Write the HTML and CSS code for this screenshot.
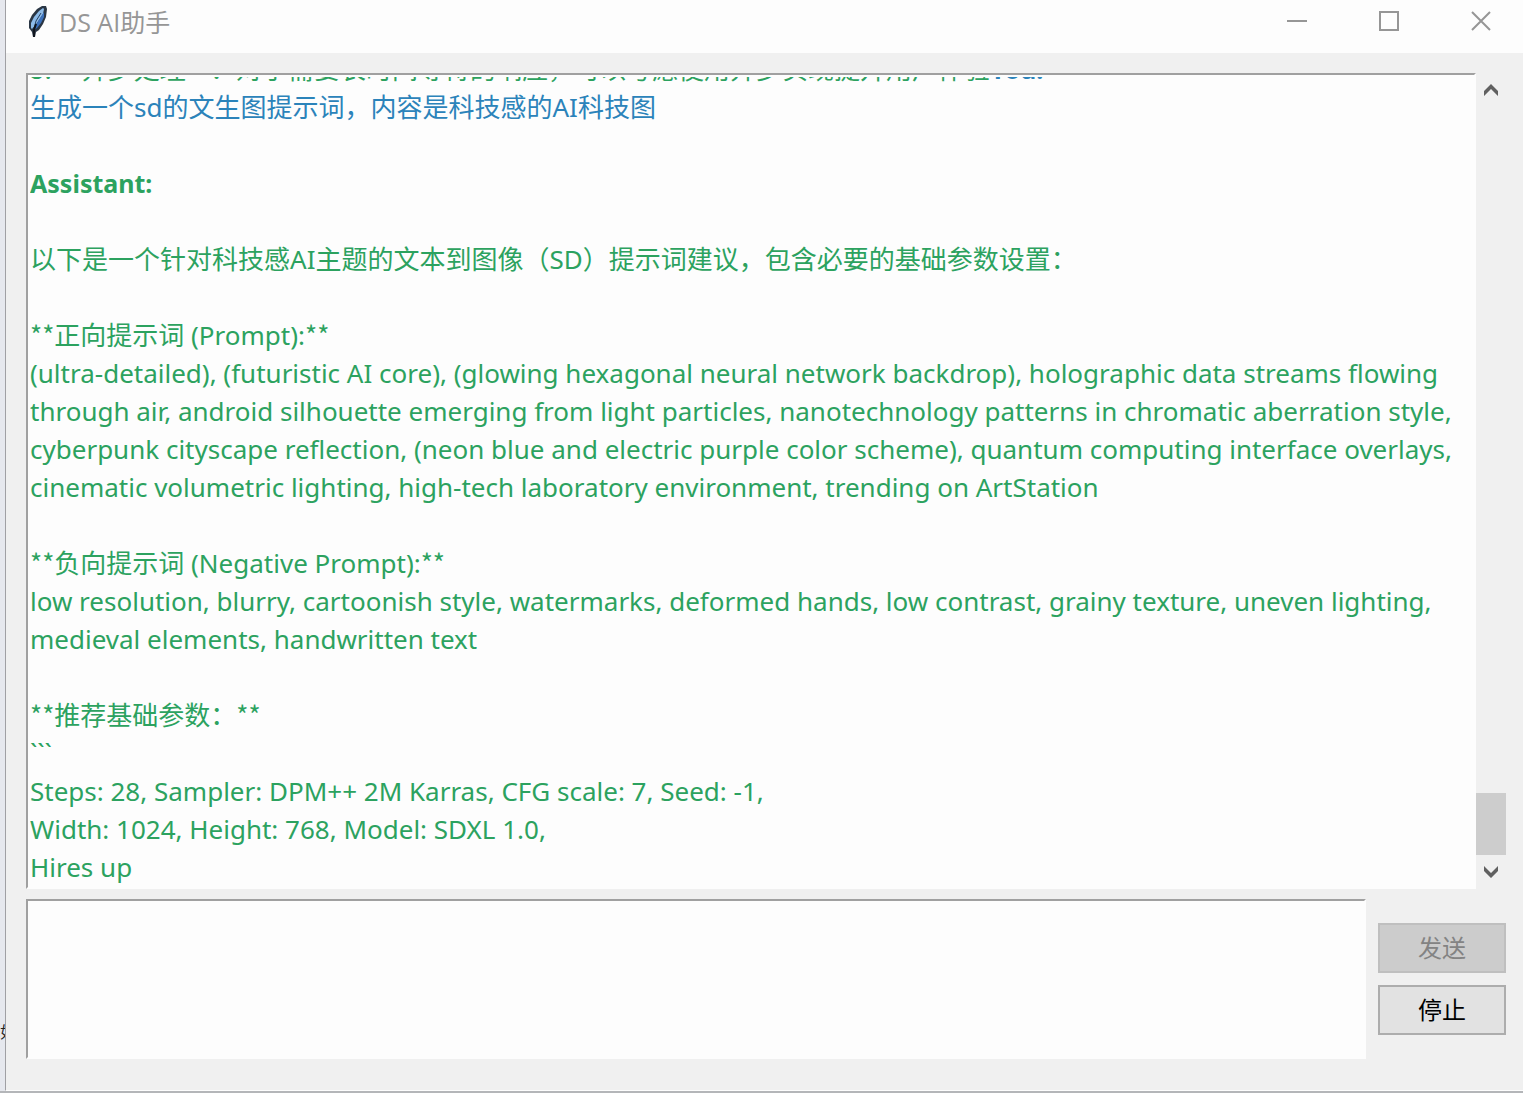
FILE: index.html
```
<!DOCTYPE html>
<html lang="zh-CN">
<head>
<meta charset="utf-8">
<title>DS AI助手</title>
<link rel="stylesheet" href="styles.css">
</head>
<body>
<div class="desktop"><span class="behind">如</span></div>
<div class="window">
  <header class="titlebar">
    <svg class="feather" viewBox="0 0 20 32" aria-hidden="true">
      <path d="M14 0l4 0 1 3-1 8-3 7-4 6-3 2-1 5-2 0-1-5-3-4 0-7 3-6 5-6z" fill="#2a3644"/>
      <path d="M15 2l1 1-1 5-6 9-5 6-1-1 0-5 3-6 5-6z" fill="#8dbbe8"/>
      <path d="M16 6l0 5-3 6-4 5-3 2 3-7z" fill="#3a70bb"/>
      <path d="M13 7L8 15 6 23" fill="none" stroke="#26405f" stroke-width="1"/>
      <path d="M8 18L6 24V31" fill="none" stroke="#10161e" stroke-width="2"/>
    </svg>
    <h1 class="title">DS AI助手</h1>
    <div class="controls">
      <button class="control" aria-label="最小化"><svg viewBox="0 0 20 20"><path d="M0 10H20"/></svg></button>
      <button class="control" aria-label="最大化"><svg viewBox="0 0 20 20"><path d="M1 1H19V19H1Z"/></svg></button>
      <button class="control" aria-label="关闭"><svg viewBox="0 0 20 20"><path d="M1 1L19 19M19 1L1 19"/></svg></button>
    </div>
  </header>
  <main class="content">
    <section class="history">
      <div class="log">
        <p><span class="han">3. **异步处理**：对于需要长时间等待的响应，可以考虑使用异步实现提升用户体验</span><b class="user">You:</b></p>
        <p class="user"><span class="han">生成一个</span>sd<span class="han">的文生图提示词，内容是科技感的</span>AI<span class="han">科技图</span></p>
        <br>
        <p><b>Assistant:</b></p>
        <br>
        <p><span class="han">以下是一个针对科技感</span>AI<span class="han">主题的文本到图像（</span>SD<span class="han">）提示词建议，包含必要的基础参数设置：</span></p>
        <br>
        <p><span class="han">**正向提示词</span> (Prompt):<span class="han">**</span></p>
        <p>(ultra-detailed), (futuristic AI core), (glowing hexagonal neural network backdrop), holographic data streams flowing through air, android silhouette emerging from light particles, nanotechnology patterns in chromatic aberration style, cyberpunk cityscape reflection, (neon blue and electric purple color scheme), quantum computing interface overlays, cinematic volumetric lighting, high-tech laboratory environment, trending on ArtStation</p>
        <br>
        <p><span class="han">**负向提示词</span> (Negative Prompt):<span class="han">**</span></p>
        <p>low resolution, blurry, cartoonish style, watermarks, deformed hands, low contrast, grainy texture, uneven lighting, medieval elements, handwritten text</p>
        <br>
        <p><span class="han">**推荐基础参数：**</span></p>
        <p>```</p>
        <p>Steps: 28, Sampler: DPM++ 2M Karras, CFG scale: 7, Seed: -1,</p>
        <p>Width: 1024, Height: 768, Model: SDXL 1.0,</p>
        <p>Hires up</p>
      </div>
      <div class="scrollbar">
        <button class="arrow" aria-label="向上滚动"><svg viewBox="0 0 14 12"><path d="M7 0L14 7V12L7 5L0 12V7Z"/></svg></button>
        <div class="track"><div class="thumb"></div></div>
        <button class="arrow" aria-label="向下滚动"><svg viewBox="0 0 14 12"><path d="M7 12L14 5V0L7 7L0 0V5Z"/></svg></button>
      </div>
    </section>
    <form class="composer">
      <textarea class="message" aria-label="消息"></textarea>
      <div class="actions">
        <button class="action" type="submit" disabled>发送</button>
        <button class="action" type="button">停止</button>
      </div>
    </form>
  </main>
</div>
</body>
</html>
```
FILE: styles.css
```
* { box-sizing: border-box; }

body {
  margin: 0;
  height: 100vh;
  display: flex;
  overflow: hidden;
  padding-bottom: 2px;
  background: #b4b6b9;
  font-family: "Noto Sans", "Noto Sans CJK SC", sans-serif;
}

button { padding: 0; border: 0; background: none; font: inherit; }
svg { display: block; }

.desktop {
  width: 5px;
  flex: none;
  display: flex;
  align-items: flex-end;
  overflow: hidden;
  padding-bottom: 48px;
  background: #e6e8ee;
  color: #222;
  font-size: 16px;
}

.window {
  flex: 1;
  min-width: 0;
  display: flex;
  flex-direction: column;
  border-left: 1px solid #a0a0a4;
  border-bottom: 1px solid #fdfdfd;
  background: #f0f0f0;
}

.titlebar {
  height: 53px;
  flex: none;
  display: flex;
  align-items: flex-start;
  padding-left: 22px;
  background: #fdfdfd;
  color: #969696;
}

.feather { width: 20px; height: 32px; margin-top: 6px; }

.title {
  margin: 0 auto 0 11px;
  font: 400 25px/44px "Open Sans", "Noto Sans CJK SC", sans-serif;
}

.controls { display: flex; margin-right: -4px; }

.control {
  width: 92px;
  height: 42px;
  display: grid;
  place-items: center;
}

.control svg { width: 20px; height: 20px; fill: none; stroke: #969696; stroke-width: 2; }

.content {
  flex: 1;
  min-height: 0;
  display: flex;
  flex-direction: column;
  gap: 10px;
  padding: 20px 17px 31px 20px;
}

.history { flex: 1; min-height: 0; display: flex; }

.log {
  flex: 1;
  min-width: 0;
  display: flex;
  flex-direction: column;
  justify-content: flex-end;
  overflow: clip;
  overflow-clip-margin: content-box;
  padding: 2px 0 1px 2px;
  border: 2px solid #fdfdfd;
  border-top-color: #a0a0a0;
  border-left-color: #a0a0a0;
  background: #fdfdfd;
  color: #2ca25f;
  font-size: 26px;
  line-height: 38px;
}

.log p { margin: 0; flex: none; }
.log b { font-size: 25px; }
.log .user { color: #2b83ba; }
.log .han { font-family: "Noto Sans CJK SC", sans-serif; line-height: 1; }

.scrollbar { width: 30px; display: flex; flex-direction: column; }

.arrow { height: 34px; display: grid; place-items: center; }
.arrow svg { width: 14px; height: 12px; fill: #606060; }

.track { flex: 1; display: flex; align-items: flex-end; }
.thumb { width: 100%; height: 62px; background: #cdcdcd; }

.composer { display: flex; gap: 12px; height: 160px; flex: none; margin: 0; }

.message {
  flex: 1;
  min-width: 0;
  resize: none;
  border: 2px solid #fdfdfd;
  border-top-color: #a0a0a0;
  border-left-color: #a0a0a0;
  background: #fdfdfd;
  font: 26px/38px "Noto Sans", "Noto Sans CJK SC", sans-serif;
  outline: 0;
}

.actions {
  width: 128px;
  display: flex;
  flex-direction: column;
  justify-content: center;
  gap: 12px;
}

.action {
  height: 50px;
  border: 2px solid #adadad;
  background: #e2e2e2;
  color: #000;
  font-size: 24px;
  line-height: 44px;
}

.action:disabled { border-color: #bfbfbf; background: #cccccc; color: #838383; }
```
